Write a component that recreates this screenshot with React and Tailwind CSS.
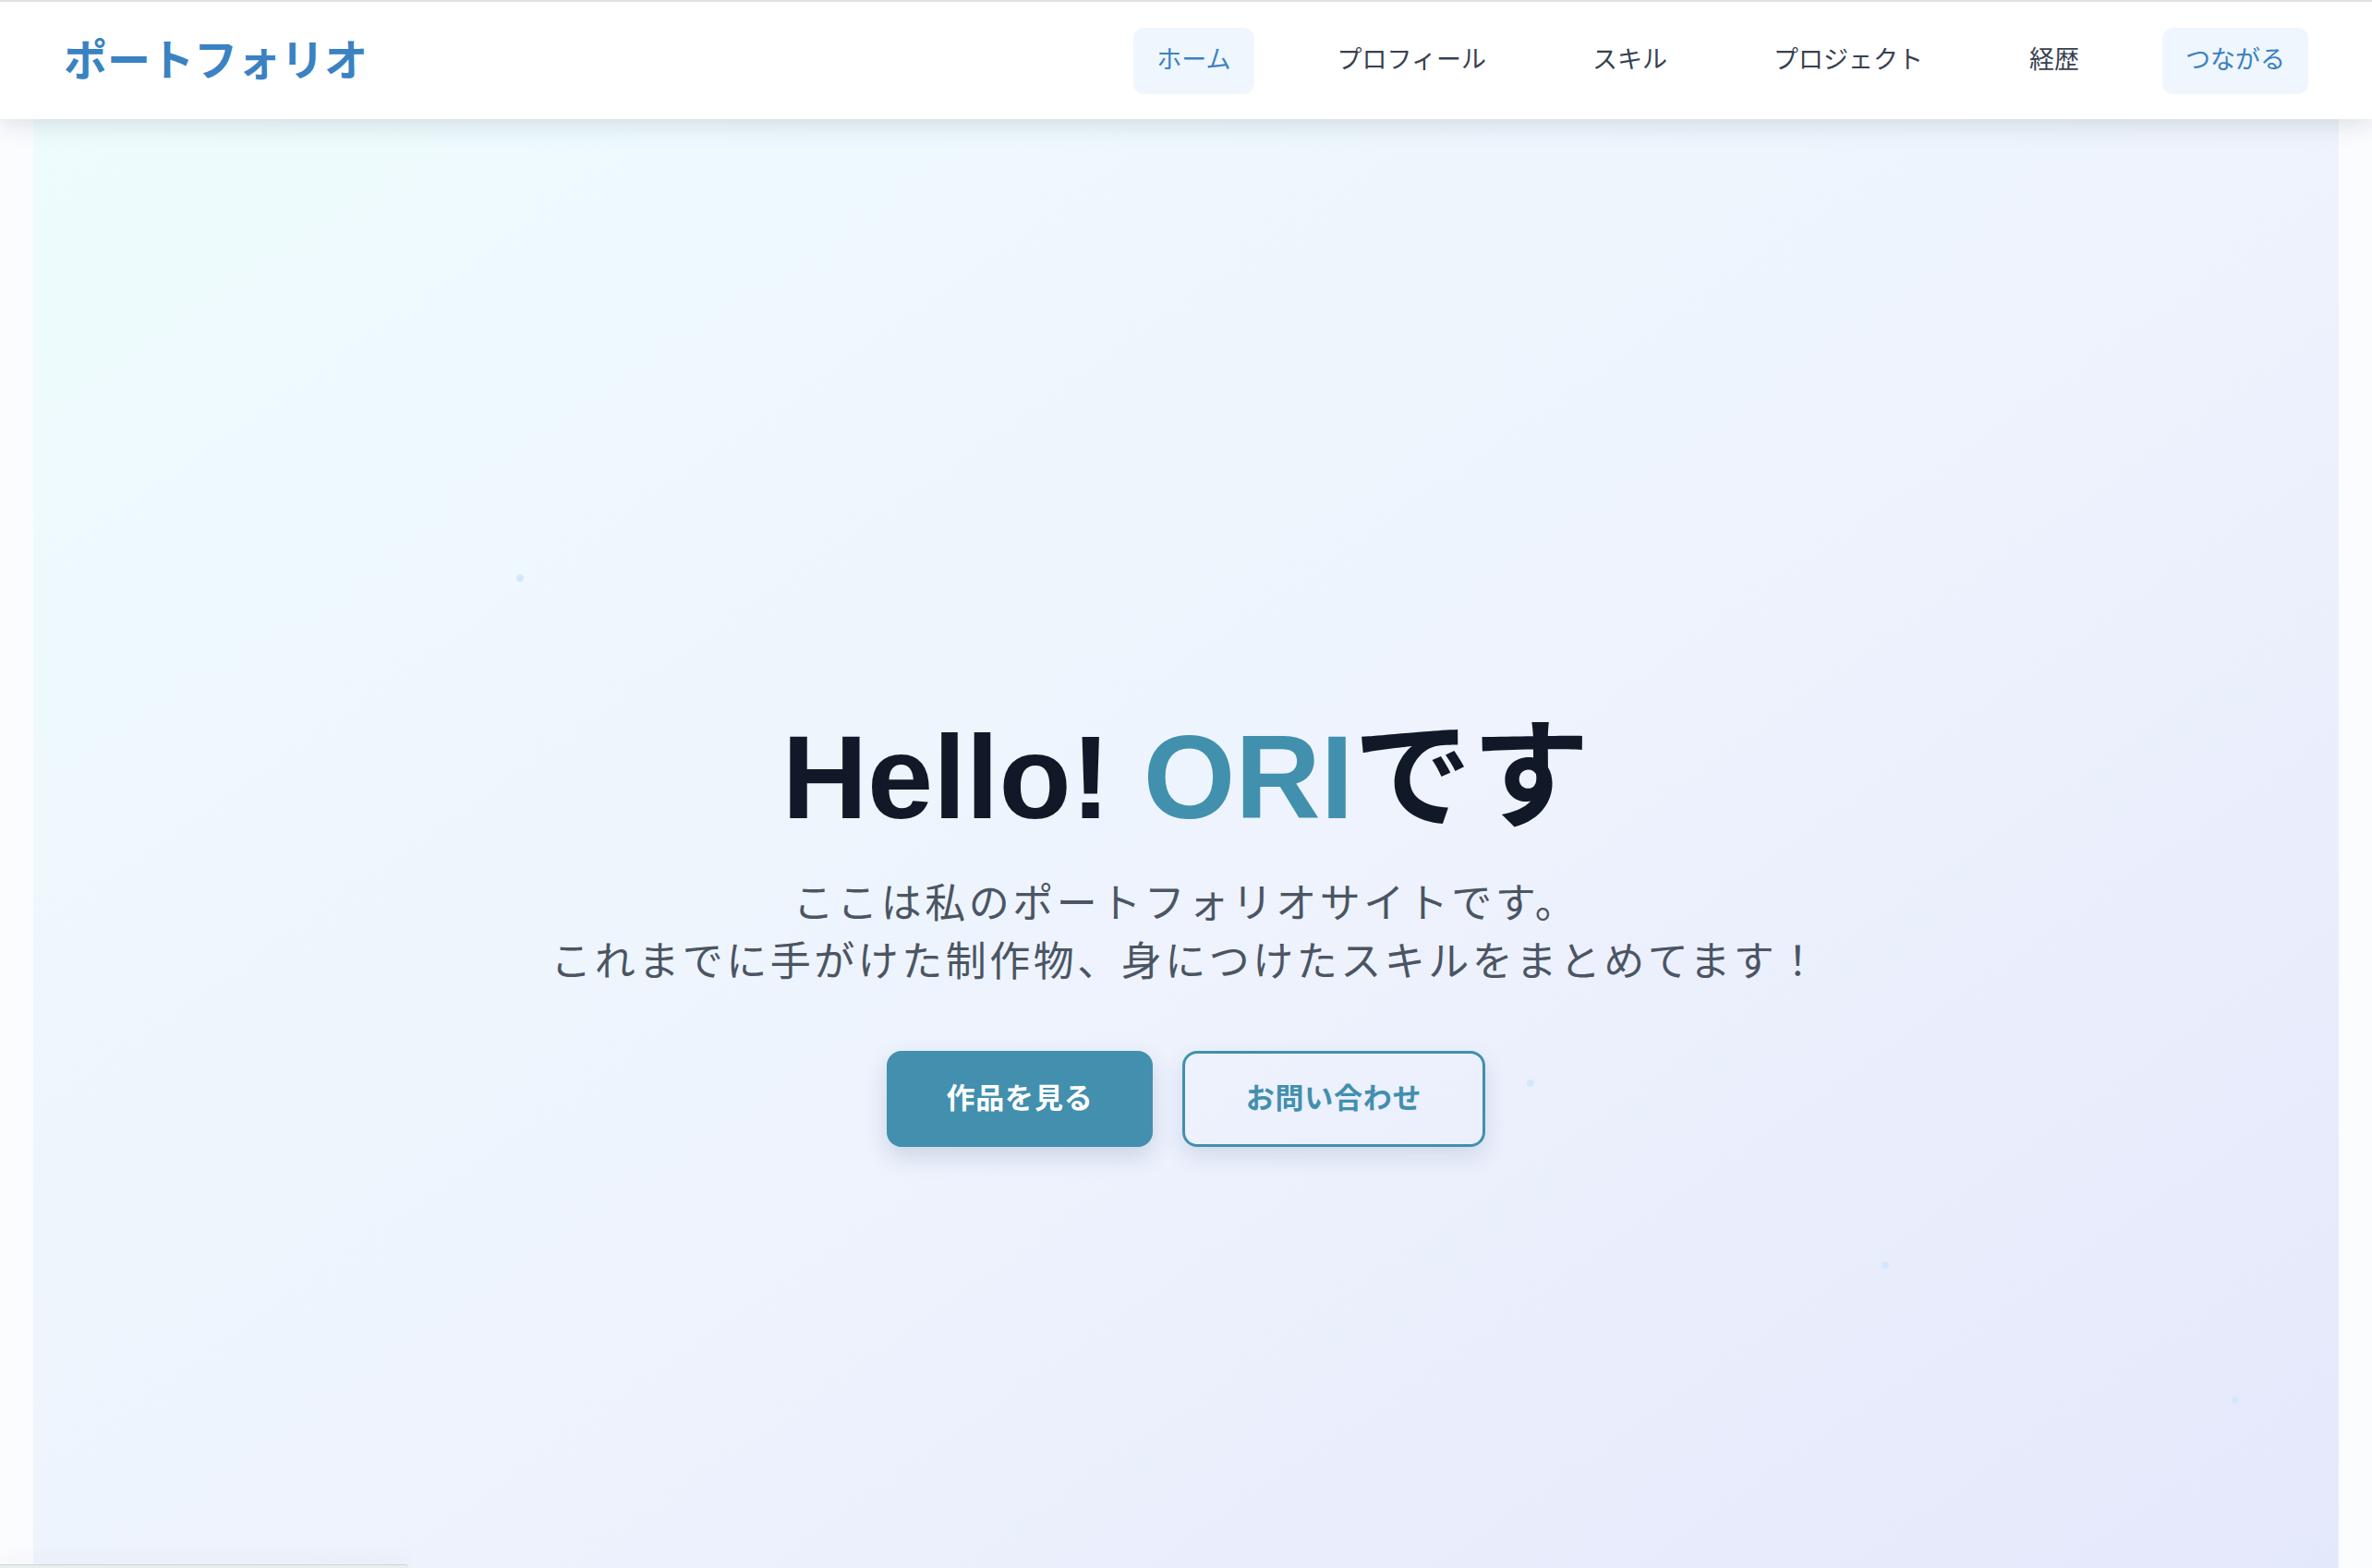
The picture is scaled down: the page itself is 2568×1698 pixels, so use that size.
/**
 * Portfolio top page: header + hero.
 */

const navItems = [
	{ label: 'ホーム', active: true },
	{ label: 'プロフィール' },
	{ label: 'スキル' },
	{ label: 'プロジェクト' },
	{ label: '経歴' },
	{ label: 'つながる', active: true },
]

const dots = [
	{ left: 523, top: 493 },
	{ left: 1617, top: 1040 },
	{ left: 2001, top: 1237 },
	{ left: 2380, top: 1383 },
]

const jp = "font-['Liberation_Sans','Noto_Sans_CJK_JP',sans-serif]"

export default function App() {
	return (
		<div className={`relative h-[1698px] overflow-hidden border-t-2 border-[#dfe2e2] bg-white ${jp}`}>
			<header className="relative z-10 flex h-[127px] items-center justify-between bg-white px-[69px] shadow-[0_6px_24px_rgba(40,60,70,0.14)]">
				<a href="#" className="text-[47px] font-bold leading-none text-[#3a82c2]">
					ポートフォリオ
				</a>
				<nav className="flex items-center gap-[65px]">
					{navItems.map((item) => (
						<a
							key={item.label}
							href="#"
							className={
								item.active
									? 'flex h-[72px] items-center rounded-xl bg-[#eff6fe] px-[25px] text-[27px] text-[#3a82c2]'
									: 'flex h-[72px] items-center rounded-xl px-[25px] text-[27px] text-[#374151]'
							}
						>
							{item.label}
						</a>
					))}
				</nav>
			</header>

			<div className="bg-[#fbfcfe] px-[36px]">
				<section className="relative flex h-[1762px] flex-col items-center justify-center bg-gradient-to-br from-[#eefcfd] via-[#eef3fd] to-[#e3e7fb]">
					{dots.map((d) => (
						<span
							key={d.left}
							className="absolute h-[8px] w-[8px] rounded-full bg-[#d4e8fb]"
							style={{ left: d.left, top: d.top }}
						/>
					))}

					<h1 className="text-[128px] font-bold leading-none text-[#111827]">
						Hello! <span className="text-[#4190ae]">ORI</span>です
					</h1>

					<p className="mt-[41px] text-center text-[44px] leading-[63px] tracking-[3.5px] text-[#4b5563]">
						ここは私のポートフォリオサイトです。
						<br />
						これまでに手がけた制作物、身につけたスキルをまとめてます！
					</p>

					<div className="mt-[65px] flex items-center gap-[32px]">
						<a
							href="#"
							className="flex h-[104px] w-[288px] items-center justify-center rounded-2xl bg-[#428fae] text-[31px] font-bold tracking-wide text-white shadow-[0_10px_24px_rgba(50,70,110,0.18)]"
						>
							作品を見る
						</a>
						<a
							href="#"
							className="flex h-[104px] w-[328px] items-center justify-center rounded-2xl border-[3px] border-[#428fae] text-[31px] font-bold tracking-wide text-[#428fae] shadow-[0_10px_24px_rgba(50,70,110,0.14)]"
						>
							お問い合わせ
						</a>
					</div>
				</section>
			</div>

			<div className="absolute bottom-0 left-0 h-[4px] w-[442px] rounded-tr-lg border-t border-[#cdd6d8] bg-[#e8eeee] shadow-[0_-6px_16px_rgba(40,60,70,0.08)]" />
		</div>
	)
}
